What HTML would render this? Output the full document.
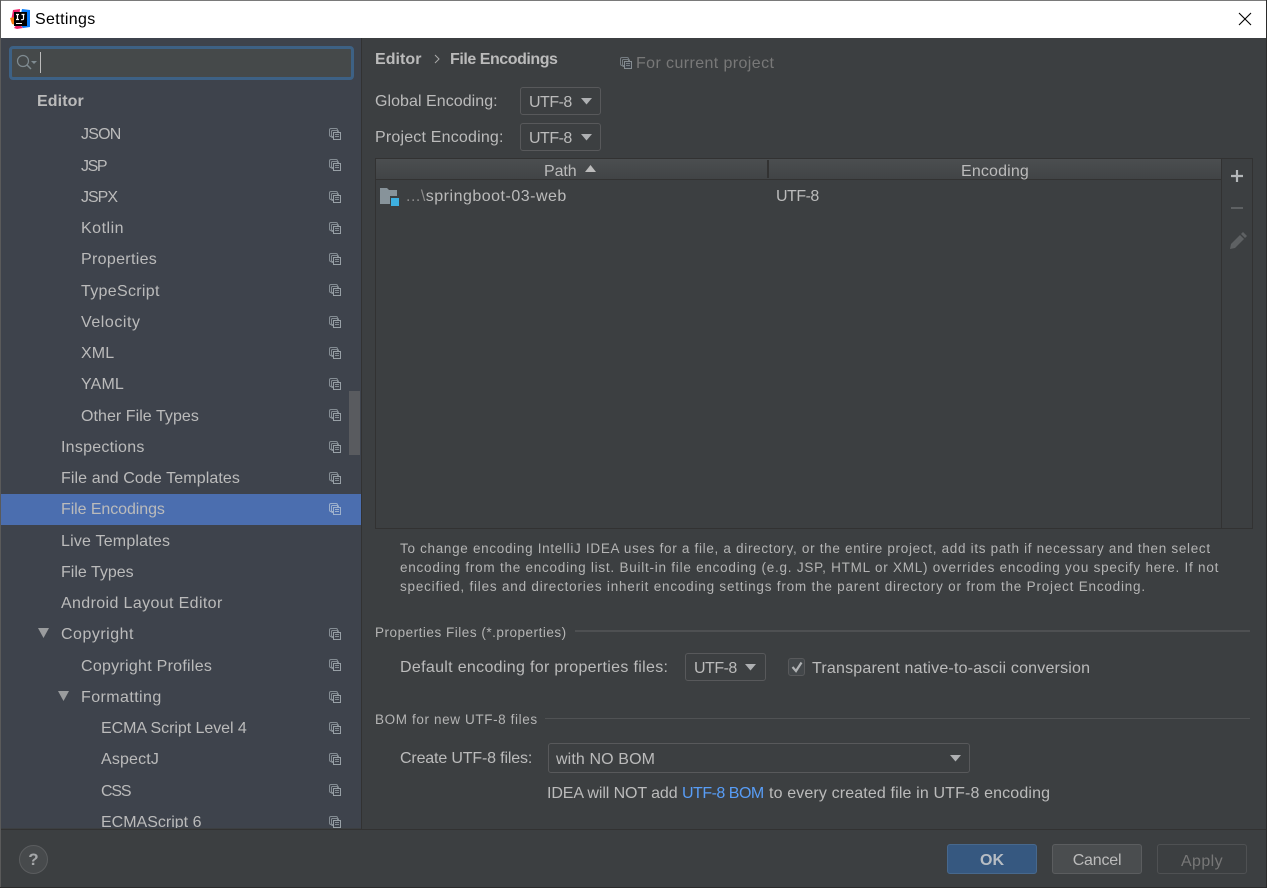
<!DOCTYPE html>
<html><head><meta charset="utf-8"><title>Settings</title>
<style>
html,body{margin:0;padding:0;background:#3c3f41}
#w{position:relative;width:1267px;height:888px;overflow:hidden;background:#3c3f41;font-family:"Liberation Sans","Noto Sans CJK SC",sans-serif;font-size:16px;color:#bbbbbb}
#w div,#w span.a,#w svg.a{position:absolute}
.t{white-space:nowrap;line-height:20px;height:20px}
.s{font-size:13.5px;color:#b4b4b4}
.b{font-weight:bold}
.cb{border:1px solid #58595b;border-radius:3px;box-sizing:border-box}
</style></head><body><div id="w">
<svg width="0" height="0" style="position:absolute"><defs>
<g id="c" fill="none" stroke="#858d94" stroke-width="1"><rect x=".5" y=".5" width="8" height="8" rx="1.500"/><rect x="2.500" y="2.500" width="7" height="7" rx="1"/><rect x="4.500" y="4.500" width="7" height="7" fill="#3e434c" stroke="#98a0a6"/><path d="M6 6.500h4M6 8.500h4" stroke="#858d94"/></g>
<g id="d" fill="none" stroke="#9db0cc" stroke-width="1"><rect x=".5" y=".5" width="8" height="8" rx="1.500"/><rect x="2.500" y="2.500" width="7" height="7" rx="1"/><rect x="4.500" y="4.500" width="7" height="7" fill="#4b6eaf"/><path d="M6 6.500h4M6 8.500h4"/></g>
</defs></svg>

<div style="left:0;top:0;width:1267px;height:38px;background:#fff;border-top:1px solid #7a7a7a;box-sizing:border-box"></div>
<div style="left:0;top:0;width:1px;height:888px;background:#5a5a5a"></div>
<div style="left:1266px;top:0;width:1px;height:888px;background:#2b2b2b"></div>
<div style="left:0;top:887px;width:1267px;height:1px;background:#2b2b2b"></div>
<svg class="a" style="left:10px;top:8px" width="21" height="22" viewBox="0 0 21 22"><path d="M3 2L10 1 9 12 1 13z" fill="#f0246b"/><path d="M0 10L5 9 6 17 2 16z" fill="#f97a12"/><path d="M12 1L20 2 20 19 13 20 9 15z" fill="#087cfa"/><path d="M4 20L8 15 13 20 7 21z" fill="#f0246b"/><rect x="4" y="4" width="13" height="14" fill="#000"/><path d="M6 6.500h3M7.500 6.500v5M6 11.500h3M11.500 6.500h3M13.500 6.500v4q0 1.200-1.200 1.200h-1.300" stroke="#fff" stroke-width="1.200" fill="none"/><rect x="6" y="15" width="6" height="1" fill="#fff"/></svg>
<div class="t" style="left:35px;top:10px;color:#000;letter-spacing:.35px">Settings</div>
<svg class="a" style="left:1238px;top:12px" width="14" height="14"><path d="M1 1L13 13M13 1L1 13" stroke="#000" stroke-width="1.100" fill="none"/></svg>

<div style="left:1px;top:38px;width:360px;height:790px;background:#3e434c;overflow:hidden">
<div style="left:0;top:456px;width:360px;height:31px;background:#4b6eaf"></div>
<div style="left:348px;top:353px;width:11px;height:64px;background:#595b5f"></div>
<div style="left:8px;top:8px;width:345px;height:34px;box-sizing:border-box;border:3px solid #3d6185;border-radius:4px;background:#45494a"></div>
<svg class="a" style="left:15px;top:16px" width="22" height="18"><circle cx="7" cy="7" r="5.500" fill="none" stroke="#7f8b91" stroke-width="1.200"/><path d="M11 11l4 4" stroke="#7f8b91" stroke-width="1.500"/><path d="M15 7h6l-3 3z" fill="#7f8b91"/></svg>
<div style="left:39px;top:14px;width:1px;height:21px;background:#bbb"></div>
<div class="t b" style="left:36px;top:54px;letter-spacing:.1px">Editor</div>

<div class="t" style="left:80px;top:87px;letter-spacing:-.8px">JSON</div>
<div class="t" style="left:80px;top:119px;letter-spacing:-1.400px">JSP</div>
<div class="t" style="left:80px;top:150px;letter-spacing:-1px">JSPX</div>
<div class="t" style="left:80px;top:181px;letter-spacing:.5px">Kotlin</div>
<div class="t" style="left:80px;top:212px;letter-spacing:.32px">Properties</div>
<div class="t" style="left:80px;top:244px;letter-spacing:.32px">TypeScript</div>
<div class="t" style="left:80px;top:275px;letter-spacing:.55px">Velocity</div>
<div class="t" style="left:80px;top:306px;letter-spacing:.1px">XML</div>
<div class="t" style="left:80px;top:337px;letter-spacing:.15px">YAML</div>
<div class="t" style="left:80px;top:369px;letter-spacing:.05px">Other File Types</div>
<div class="t" style="left:60px;top:400px;letter-spacing:.24px">Inspections</div>
<div class="t" style="left:60px;top:431px;letter-spacing:.1px">File and Code Templates</div>
<div class="t" style="left:60px;top:462px;letter-spacing:-.08px">File Encodings</div>
<div class="t" style="left:60px;top:494px;letter-spacing:.2px">Live Templates</div>
<div class="t" style="left:60px;top:525px;letter-spacing:0">File Types</div>
<div class="t" style="left:60px;top:556px;letter-spacing:.37px">Android Layout Editor</div>
<div class="t" style="left:60px;top:587px;letter-spacing:.5px">Copyright</div>
<div class="t" style="left:80px;top:619px;letter-spacing:.27px">Copyright Profiles</div>
<div class="t" style="left:80px;top:650px;letter-spacing:.42px">Formatting</div>
<div class="t" style="left:100px;top:681px;letter-spacing:-.05px">ECMA Script Level 4</div>
<div class="t" style="left:100px;top:712px;letter-spacing:.15px">AspectJ</div>
<div class="t" style="left:100px;top:744px;letter-spacing:-1.200px">CSS</div>
<div class="t" style="left:100px;top:775px;letter-spacing:0">ECMAScript 6</div>

<svg class="a" style="left:37px;top:590px" width="12" height="10"><path d="M0 0h11L5.500 10z" fill="#9a9c9e"/></svg>
<svg class="a" style="left:57px;top:653px" width="12" height="10"><path d="M0 0h11L5.500 10z" fill="#9a9c9e"/></svg>

<svg class="a" style="left:328px;top:90px" width="12" height="12"><use href="#c"/></svg>
<svg class="a" style="left:328px;top:121px" width="12" height="12"><use href="#c"/></svg>
<svg class="a" style="left:328px;top:153px" width="12" height="12"><use href="#c"/></svg>
<svg class="a" style="left:328px;top:184px" width="12" height="12"><use href="#c"/></svg>
<svg class="a" style="left:328px;top:215px" width="12" height="12"><use href="#c"/></svg>
<svg class="a" style="left:328px;top:246px" width="12" height="12"><use href="#c"/></svg>
<svg class="a" style="left:328px;top:278px" width="12" height="12"><use href="#c"/></svg>
<svg class="a" style="left:328px;top:309px" width="12" height="12"><use href="#c"/></svg>
<svg class="a" style="left:328px;top:340px" width="12" height="12"><use href="#c"/></svg>
<svg class="a" style="left:328px;top:371px" width="12" height="12"><use href="#c"/></svg>
<svg class="a" style="left:328px;top:403px" width="12" height="12"><use href="#c"/></svg>
<svg class="a" style="left:328px;top:434px" width="12" height="12"><use href="#c"/></svg>
<svg class="a" style="left:328px;top:465px" width="12" height="12"><use href="#d"/></svg>
<svg class="a" style="left:328px;top:590px" width="12" height="12"><use href="#c"/></svg>
<svg class="a" style="left:328px;top:621px" width="12" height="12"><use href="#c"/></svg>
<svg class="a" style="left:328px;top:653px" width="12" height="12"><use href="#c"/></svg>
<svg class="a" style="left:328px;top:684px" width="12" height="12"><use href="#c"/></svg>
<svg class="a" style="left:328px;top:715px" width="12" height="12"><use href="#c"/></svg>
<svg class="a" style="left:328px;top:746px" width="12" height="12"><use href="#c"/></svg>
<svg class="a" style="left:328px;top:778px" width="12" height="12"><use href="#c"/></svg>
</div>
<div style="left:361px;top:38px;width:1px;height:791px;background:#323232"></div>

<div class="t b" style="left:375px;top:50px;letter-spacing:.05px">Editor</div>
<svg class="a" style="left:433px;top:54px" width="8" height="10"><path d="M2 1l4 4-4 4" fill="none" stroke="#aaa" stroke-width="1"/></svg>
<div class="t b" style="left:450px;top:50px;letter-spacing:-.45px">File Encodings</div>
<svg class="a" style="left:620px;top:57px;opacity:.8" width="12" height="12"><use href="#c"/></svg>
<div class="t" style="left:636px;top:54px;color:#787878;letter-spacing:.4px">For current project</div>

<div class="t" style="left:375px;top:92px;letter-spacing:.05px">Global Encoding:</div>
<div class="t" style="left:375px;top:128px;letter-spacing:.19px">Project Encoding:</div>
<div class="cb" style="left:520px;top:87px;width:81px;height:28px"></div>
<div class="t" style="left:529px;top:93px;letter-spacing:-.5px">UTF-8</div>
<svg class="a" style="left:581px;top:98px" width="11" height="7"><path d="M0 0h11L5.500 6.500z" fill="#aeb0b2"/></svg>
<div class="cb" style="left:520px;top:123px;width:81px;height:28px"></div>
<div class="t" style="left:529px;top:129px;letter-spacing:-.5px">UTF-8</div>
<svg class="a" style="left:581px;top:134px" width="11" height="7"><path d="M0 0h11L5.500 6.500z" fill="#aeb0b2"/></svg>

<div style="left:375px;top:158px;width:878px;height:371px;box-sizing:border-box;border:1px solid #323232"></div>
<div style="left:376px;top:159px;width:845px;height:21px;background:linear-gradient(#4b4e50,#414446);border-bottom:1px solid #323232;box-sizing:border-box"></div>
<div style="left:767px;top:160px;width:2px;height:18px;background:#323232"></div>
<div style="left:1221px;top:159px;width:1px;height:369px;background:#323232"></div>
<div class="t" style="left:544px;top:162px;letter-spacing:-.1px">Path</div>
<svg class="a" style="left:585px;top:165px" width="12" height="7"><path d="M0 7h11L5.500 0z" fill="#bbb"/></svg>
<div class="t" style="left:961px;top:162px;letter-spacing:.15px">Encoding</div>

<svg class="a" style="left:380px;top:187px" width="20" height="20"><path d="M0 1h7l2 2h8v5h-7v9H0z" fill="#87939a"/><path d="M10 8h7v1h-7z" fill="#87939a"/><rect x="11" y="11" width="8" height="8" fill="#3eb0e0"/></svg>
<div class="t" style="left:406px;top:187px;letter-spacing:.5px"><span style="color:#8c8c8c">...\</span>springboot-03-web</div>
<div class="t" style="left:776px;top:187px;letter-spacing:-.5px">UTF-8</div>

<svg class="a" style="left:1230px;top:169px" width="14" height="14"><path d="M7 1v12M1 7h12" stroke="#b4b7b9" stroke-width="2.200"/></svg>
<svg class="a" style="left:1230px;top:202px" width="14" height="12"><path d="M1 6h12" stroke="#5e6163" stroke-width="2"/></svg>
<svg class="a" style="left:1228px;top:231px" width="20" height="20"><path d="M2 18l1-5 9-9 4 4-9 9zM13 3l2-2 4 4-2 2z" fill="#5e6163"/></svg>

<div class="t s" style="left:400px;top:539px;letter-spacing:.69px">To change encoding IntelliJ IDEA uses for a file, a directory, or the entire project, add its path if necessary and then select</div>
<div class="t s" style="left:400px;top:558px;letter-spacing:.76px">encoding from the encoding list. Built-in file encoding (e.g. JSP, HTML or XML) overrides encoding you specify here. If not</div>
<div class="t s" style="left:400px;top:577px;letter-spacing:.79px">specified, files and directories inherit encoding settings from the parent directory or from the Project Encoding.</div>

<div class="t s" style="left:375px;top:623px;letter-spacing:.52px">Properties Files (*.properties)</div>
<div style="left:575px;top:630px;width:675px;height:2px;background:#4e5052"></div>
<div class="t" style="left:400px;top:658px;letter-spacing:.32px">Default encoding for properties files:</div>
<div class="cb" style="left:685px;top:653px;width:81px;height:28px"></div>
<div class="t" style="left:694px;top:659px;letter-spacing:-.5px">UTF-8</div>
<svg class="a" style="left:745px;top:664px" width="11" height="7"><path d="M0 0h11L5.500 6.500z" fill="#aeb0b2"/></svg>
<div class="cb" style="left:788px;top:658px;width:17px;height:18px;background:#43474a"></div>
<svg class="a" style="left:790px;top:660px" width="14" height="14"><path d="M2.500 7L6 11l5.500-8.500" fill="none" stroke="#b0b2b4" stroke-width="2.200"/></svg>
<div class="t" style="left:812px;top:659px;letter-spacing:.2px">Transparent native-to-ascii conversion</div>

<div class="t s" style="left:375px;top:710px;letter-spacing:.62px">BOM for new UTF-8 files</div>
<div style="left:545px;top:718px;width:705px;height:1px;background:#505254"></div>
<div class="t" style="left:400px;top:749px;letter-spacing:-.16px">Create UTF-8 files:</div>
<div class="cb" style="left:548px;top:743px;width:422px;height:30px"></div>
<div class="t" style="left:556px;top:750px;letter-spacing:.12px">with NO BOM</div>
<svg class="a" style="left:950px;top:755px" width="11" height="7"><path d="M0 0h11L5.500 6.500z" fill="#aeb0b2"/></svg>
<div class="t" style="left:547px;top:784px;letter-spacing:-.1px">IDEA will NOT add</div>
<div class="t" style="left:682px;top:784px;letter-spacing:-.5px;color:#589df6">UTF-8 BOM</div>
<div class="t" style="left:769px;top:784px;letter-spacing:.14px">to every created file in UTF-8 encoding</div>

<div style="left:1px;top:829px;width:1265px;height:1px;background:#323232"></div>
<div style="left:19px;top:845px;width:29px;height:29px;box-sizing:border-box;border-radius:50%;border:1px solid #5b5d5f;background:#474a4c"></div>
<div class="t b" style="left:19px;top:850px;width:29px;text-align:center;font-size:17px;color:#a5a7a9">?</div>

<div style="left:947px;top:844px;width:90px;height:30px;box-sizing:border-box;border:1px solid #47688d;border-radius:3px;background:#365880"></div>
<div class="t b" style="left:947px;top:851px;width:90px;text-align:center;color:#b7bdc4">OK</div>
<div style="left:1052px;top:844px;width:90px;height:30px;box-sizing:border-box;border:1px solid #5b5d5f;border-radius:3px;background:#4a4d4f"></div>
<div class="t" style="left:1052px;top:851px;width:90px;text-align:center;letter-spacing:-.2px">Cancel</div>
<div style="left:1157px;top:844px;width:90px;height:30px;box-sizing:border-box;border:1px solid #4f5153;border-radius:3px"></div>
<div class="t" style="left:1157px;top:852px;width:90px;text-align:center;color:#777;letter-spacing:.42px">Apply</div>
</div></body></html>
